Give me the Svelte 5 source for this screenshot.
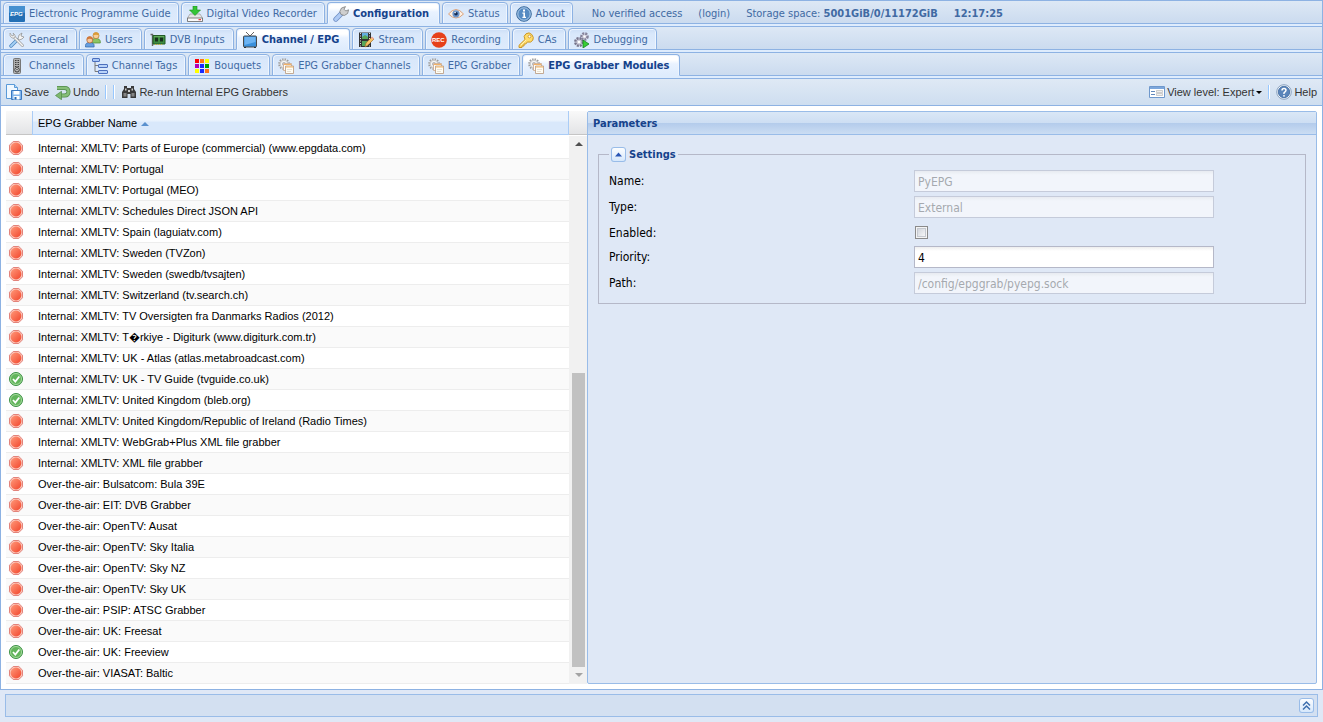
<script>
	const mainTabs = [
		{ label: 'Electronic Programme Guide', icon: 'epg' },
		{ label: 'Digital Video Recorder', icon: 'dvr' },
		{ label: 'Configuration', icon: 'wrench' },
		{ label: 'Status', icon: 'eye' },
		{ label: 'About', icon: 'info' }
	];

	const configTabs = [
		{ label: 'General', icon: 'tools' },
		{ label: 'Users', icon: 'users' },
		{ label: 'DVB Inputs', icon: 'card' },
		{ label: 'Channel / EPG', icon: 'tv' },
		{ label: 'Stream', icon: 'film' },
		{ label: 'Recording', icon: 'rec' },
		{ label: 'CAs', icon: 'key' },
		{ label: 'Debugging', icon: 'debug' }
	];

	const channelTabs = [
		{ label: 'Channels', icon: 'remote' },
		{ label: 'Channel Tags', icon: 'tree' },
		{ label: 'Bouquets', icon: 'grid' },
		{ label: 'EPG Grabber Channels', icon: 'grabber' },
		{ label: 'EPG Grabber', icon: 'grabber' },
		{ label: 'EPG Grabber Modules', icon: 'grabber' }
	];

	const modules = [
		{ name: 'Internal: XMLTV: Parts of Europe (commercial) (www.epgdata.com)' },
		{ name: 'Internal: XMLTV: Portugal' },
		{ name: 'Internal: XMLTV: Portugal (MEO)' },
		{ name: 'Internal: XMLTV: Schedules Direct JSON API' },
		{ name: 'Internal: XMLTV: Spain (laguiatv.com)' },
		{ name: 'Internal: XMLTV: Sweden (TVZon)' },
		{ name: 'Internal: XMLTV: Sweden (swedb/tvsajten)' },
		{ name: 'Internal: XMLTV: Switzerland (tv.search.ch)' },
		{ name: 'Internal: XMLTV: TV Oversigten fra Danmarks Radios (2012)' },
		{ name: 'Internal: XMLTV: T\uFFFDrkiye - Digiturk (www.digiturk.com.tr)' },
		{ name: 'Internal: XMLTV: UK - Atlas (atlas.metabroadcast.com)' },
		{ name: 'Internal: XMLTV: UK - TV Guide (tvguide.co.uk)', enabled: true },
		{ name: 'Internal: XMLTV: United Kingdom (bleb.org)', enabled: true },
		{ name: 'Internal: XMLTV: United Kingdom/Republic of Ireland (Radio Times)' },
		{ name: 'Internal: XMLTV: WebGrab+Plus XML file grabber' },
		{ name: 'Internal: XMLTV: XML file grabber' },
		{ name: 'Over-the-air: Bulsatcom: Bula 39E' },
		{ name: 'Over-the-air: EIT: DVB Grabber' },
		{ name: 'Over-the-air: OpenTV: Ausat' },
		{ name: 'Over-the-air: OpenTV: Sky Italia' },
		{ name: 'Over-the-air: OpenTV: Sky NZ' },
		{ name: 'Over-the-air: OpenTV: Sky UK' },
		{ name: 'Over-the-air: PSIP: ATSC Grabber' },
		{ name: 'Over-the-air: UK: Freesat' },
		{ name: 'Over-the-air: UK: Freeview', enabled: true },
		{ name: 'Over-the-air: VIASAT: Baltic' }
	];

	let mainTab = $state('Configuration');
	let configTab = $state('Channel / EPG');
	let channelTab = $state('EPG Grabber Modules');
	let enabled = $state(false);
	let priority = $state('4');
	let open = $state(true);
</script>

{#snippet icon(name)}
	<svg class="icon" viewBox="0 0 16 16" width="16" height="16" aria-hidden="true">
		{#if name === 'epg'}
			<rect width="16" height="16" rx="1" fill="#2470b5" />
			<rect width="16" height="7" rx="1" fill="#4590d0" />
			<text x="1" y="10" font-size="6" font-weight="bold" font-style="italic" font-family="Liberation Sans, sans-serif" fill="#fff">EPG</text>
		{:else if name === 'dvr'}
			<path d="M3 8h10l2.500 4v3H.5v-3z" fill="#e4e4e4" stroke="#999" stroke-width=".7" />
			<path d="M.5 12h15v3.500H.5z" fill="#fafafa" stroke="#666" stroke-width=".8" />
			<path d="M11.500 13.700H14" stroke="#e11" />
			<path d="M6 0h4v4h3.500L8 9.500 2.500 4H6z" fill="#34c534" stroke="#1b8c1f" stroke-width=".6" />
		{:else if name === 'wrench'}
			<path d="M2.800 13.200 8.500 7.500" stroke="#6f8fc4" stroke-width="5" stroke-linecap="round" />
			<path d="M2.800 13.200 8.500 7.500" stroke="#aecaf4" stroke-width="3.400" stroke-linecap="round" />
			<path d="M8 8.500 6.800 5.500 8.500 2 12.500.6 11 3.200l1.800 1.800 2.800-1.200-1 3.700-3.300 2z" fill="#cfcfcf" stroke="#7f7f7f" stroke-width=".8" />
		{:else if name === 'eye'}
			<path d="M.5 8Q8-1 15.500 8 8 16 .5 8z" fill="#fdf1e6" stroke="#d9a27c" />
			<circle cx="8" cy="7.800" r="3.600" fill="#6a93c8" />
			<circle cx="8" cy="7.800" r="1.800" fill="#142a52" />
			<circle cx="7.100" cy="6.600" r=".8" fill="#fff" />
		{:else if name === 'info'}
			<circle cx="8" cy="8" r="7.300" fill="#568bc2" stroke="#3d6b9c" />
			<circle cx="8" cy="8" r="6.200" fill="none" stroke="#b4d0ec" stroke-width=".9" />
			<path d="M7 3.500h2v2H7zM6.400 6.500H9v4.300h1v1.200H6.400v-1.200h1V7.700h-1z" fill="#fff" />
		{:else if name === 'tools'}
			<path d="m2 14 6-6" stroke="#4e86bf" stroke-width="3.400" stroke-linecap="round" />
			<path d="m2 14 6-6" stroke="#a5d0f4" stroke-width="1.800" stroke-linecap="round" />
			<path d="m4.500 4.500 9 9" stroke="#9a9a9a" stroke-width="2.800" stroke-linecap="round" />
			<path d="m4.500 4.500 9 9" stroke="#f5f5f5" stroke-width="1.500" stroke-linecap="round" />
			<path d="M1 1v3l2 2h2l1-1V3L4 1 5 3 3 4z" fill="#eee" stroke="#8f8f8f" stroke-width=".6" />
			<path d="m9 7 1-4 3-2-1 3 3 1-2 2-3 1z" fill="#f3f3f3" stroke="#8a8a8a" stroke-width=".7" />
		{:else if name === 'users'}
			<path d="M6.500 11V9.500q0-3 4.300-3t4.500 3V11z" fill="#8cc563" stroke="#4f8a2e" stroke-width=".7" />
			<circle cx="11" cy="3.700" r="3" fill="#f8cf97" stroke="#b3772a" stroke-width=".7" />
			<path d="M8 3.300q0-3.100 3-3.100t3 3.100q-3-1.300-6 0z" fill="#d99b38" />
			<path d="M.5 15v-1.500q0-3 4.300-3t4.300 3V15z" fill="#679fe0" stroke="#3266a5" stroke-width=".7" />
			<circle cx="4.800" cy="8" r="3" fill="#f7c79b" stroke="#ad5b2a" stroke-width=".7" />
			<path d="M1.800 7.800q-.5-3.500 3-3.500t3 3.500q-3-2-6 0z" fill="#d0783a" />
		{:else if name === 'card'}
			<path d="M.5 2.500h2V14" fill="none" stroke="#666" stroke-width="1.400" />
			<path d="M3 3.500h12v8.500H3z" fill="#3f8c41" stroke="#235c27" />
			<path d="M5 5.500h3v4H5zM10 5.500h3v4h-3z" fill="#16321c" />
			<path d="M5 12.500h8" stroke="#d2b841" stroke-dasharray="1 1" />
			<path d="M4 4.700h10" stroke="#8dcc7e" stroke-width=".6" />
		{:else if name === 'tv'}
			<path d="m4 0 4 4 4-4" fill="none" stroke="#666" />
			<rect x="1.500" y="4" width="13" height="11" rx="1" fill="#3a90dc" stroke="#4a4a4a" />
			<path d="M2.500 5h11v5l-11 3z" fill="#6db4f3" />
			<path d="M2 15.500h2m8 0h2" stroke="#333" />
		{:else if name === 'film'}
			<path d="M1 .5h12V15H1z" fill="#333" />
			<path d="M4 1h6v6H4z" fill="#65aee0" />
			<path d="m4 5 3-2 3 2v2H4zM4 9h6v5H4z" fill="#57a65a" />
			<path d="M2.500 1v14M11.500 1v14" stroke="#ddd" stroke-dasharray="1 1.500" />
			<path d="m7 15 1-4 6-6 2 2-6 6z" fill="#f8c368" stroke="#a8722a" stroke-width=".7" />
			<path d="m13 5.500 1-1 2 2-1 1z" fill="#f1a9a6" />
		{:else if name === 'rec'}
			<circle cx="8" cy="8" r="7.800" fill="#e6401a" />
			<text x="1" y="10" font-size="6" font-weight="bold" font-family="Liberation Sans, sans-serif" fill="#fff">REC</text>
		{:else if name === 'key'}
			<path d="M7 7.500 1 13.300v2.200h3V14h2v-2h1.800l1.500-2q4 1 5.500-1.800t-1-5.700T8 1.800 7 7.500z" fill="#ffdc6b" stroke="#c9962a" />
			<circle cx="11.500" cy="4.500" r="1.400" fill="#fff" stroke="#bb8419" stroke-width=".7" />
			<path d="m3 13 5-5" stroke="#fff4b8" />
		{:else if name === 'debug'}
			<circle cx="5" cy="10" r="3.800" fill="#c9c8d6" stroke="#77758c" stroke-width="2.400" stroke-dasharray="2 1" />
			<circle cx="10.500" cy="4.500" r="3.100" fill="#d3d2df" stroke="#85829a" stroke-width="2.400" stroke-dasharray="2 1" />
			<circle cx="5" cy="10" r="1.300" fill="#fff" />
			<circle cx="10.500" cy="4.500" r="1.100" fill="#fff" />
			<path d="m9 8 6 4-6 4z" fill="#36ce34" stroke="#148021" stroke-width=".8" />
		{:else if name === 'remote'}
			<rect x="4.500" y=".5" width="7" height="15" rx="1" fill="#b0b0b0" stroke="#777" />
			<path d="M6 2.500h4M6 4.500h4M6 6.500h4M6 8.500h4" stroke="#3c3c3c" stroke-dasharray="1 .5" />
			<circle cx="8" cy="11.800" r="2.200" fill="#eee" stroke="#333" />
			<circle cx="8" cy="11.800" r=".7" />
		{:else if name === 'tree'}
			<path d="M3 4v9.500h4M3 7.500h4" fill="none" stroke="#7a7a7a" />
			<rect x=".5" y=".5" width="7" height="3" rx=".5" fill="#a9c7f7" stroke="#4c6fbd" />
			<rect x="6.500" y="6.500" width="9" height="3" rx=".5" fill="#b9d3f9" stroke="#4c6fbd" />
			<rect x="6.500" y="12.500" width="9" height="3" rx=".5" fill="#b9d3f9" stroke="#4c6fbd" />
		{:else if name === 'grid'}
			<path d="M1 1h4v4H1z" fill="#f00" /><path d="M6 1h4v4H6z" fill="#ff7518" /><path d="M11 1h4v4h-4z" fill="#ff0" />
			<path d="M1 6h4v4H1z" fill="#b100b4" /><path d="M6 6h4v4H6z" fill="#1a29ff" /><path d="M11 6h4v4h-4z" fill="#00a400" />
			<path d="M1 11h4v4H1z" fill="#ff0" /><path d="M6 11h4v4H6z" fill="#1a29ff" /><path d="M11 11h4v4h-4z" fill="#ff7518" />
		{:else if name === 'grabber'}
			<circle cx="6" cy="6" r="4.900" fill="#f2f2f2" stroke="#9c9c9c" stroke-width="1.800" stroke-dasharray="1.400 1.170" />
			<circle cx="6" cy="6" r="3.800" fill="#f5f5f5" stroke="#b0b0b0" stroke-width=".7" />
			<circle cx="6" cy="6" r="1.600" fill="#dae7f8" stroke="#999" stroke-width=".6" />
			<path d="M5.500 5.500h8v7h-8z" fill="#fff" stroke="#c9a68a" stroke-width=".8" />
			<path d="M7.500 8h8v7.500h-8z" fill="#fffdf4" stroke="#b8977a" stroke-width=".8" />
			<path d="M6 6.500h7M8 9h7" stroke="#f3b366" />
			<path d="M9 11.500h5M9 13.500h4" stroke="#d6cdbd" stroke-width=".6" />
		{:else if name === 'save'}
			<path d="M.5.500h8l3 3v11H.5z" fill="#f0f8ff" stroke="#5a9ad8" />
			<path d="M8.500.500v3h3" fill="#b5d9f7" stroke="#5a9ad8" />
			<path d="M5.500 6.500h10v9h-10z" fill="#82b4ea" stroke="#3a78c0" />
			<path d="M7.500 7h6v3.500h-6zM7.500 12h6v3.500h-6z" fill="#fff" />
			<path d="M8.500 13h2v2.500h-2z" fill="#2b6db7" />
		{:else if name === 'undo'}
			<path d="M2 4h7.500q4 0 4 3.700t-4 3.800H6" fill="none" stroke="#4f8a48" stroke-width="4" />
			<path d="M2 4h7.500q4 0 4 3.700t-4 3.800H6" fill="none" stroke="#86be78" stroke-width="2.600" />
			<path d="M6.500 7.300v8.400l-6-4.200z" fill="#7db86e" stroke="#4f8a48" stroke-width=".7" />
		{:else if name === 'binoculars'}
			<path d="M3 2h3v2h4V2h3v3l2 3v6H9.500v-4h-3v4H1V8l2-3z" fill="#3a3a3a" />
			<path d="M2.500 9h3v3.500h-3zM10.500 9h3v3.500h-3z" fill="#858585" />
			<path d="M4 4.500h1.500v2H4zM10.500 4.500H12v2h-1.500zM7 6h2v2H7z" fill="#ccc" />
		{:else if name === 'view'}
			<path d="M.5 2.500h15v11H.5z" fill="#fff" stroke="#6f98cc" />
			<path d="M1 3h14v2H1z" fill="#7da7dc" />
			<path d="M2 7.500h4M2 10.500h4" stroke="#6188bd" />
			<path d="M7.500 6.500h6v2h-6zM7.500 9.500h6v2h-6z" fill="#eee" stroke="#bbb" stroke-width=".7" />
		{:else if name === 'help'}
			<circle cx="8" cy="8" r="7.300" fill="#f3f7fb" stroke="#8aa2bf" />
			<circle cx="8" cy="8" r="5.700" fill="#5a85ba" stroke="#3b679f" stroke-width=".8" />
			<path d="M6 6.500q0-2 2-2t2 1.800Q10 7.500 8 8.800V10" fill="none" stroke="#fff" stroke-width="1.500" />
			<circle cx="8" cy="11.800" r=".9" fill="#fff" />
		{:else if name === 'enabled'}
			<circle cx="8" cy="8" r="6.500" fill="#62b55b" stroke="#3d9146" />
			<circle cx="8" cy="8" r="5.500" fill="none" stroke="#a5d99d" />
			<path d="m5 8 2.300 2.500 4-5" fill="none" stroke="#fff" stroke-width="1.800" />
		{:else if name === 'disabled'}
			<path d="M5.200 1.500h5.600l3.700 3.700v5.600l-3.700 3.700H5.200l-3.700-3.700V5.200z" fill="#fbc5b9" stroke="#e2837b" />
			<circle cx="8" cy="8" r="5.400" fill="url(#stop)" />
		{/if}
	</svg>
{/snippet}

{#snippet tab(item, active, select)}
	<button class="tab" class:active={active === item.label} role="tab" aria-selected={active === item.label} onclick={() => select(item.label)}>
		{@render icon(item.icon)}
		<span>{item.label}</span>
	</button>
{/snippet}

<svg class="defs" width="0" height="0" aria-hidden="true">
	<linearGradient id="stop" x1="0" y1="0" x2="1" y2="1">
		<stop offset="0" stop-color="#ff9a7b" />
		<stop offset="1" stop-color="#f2452c" />
	</linearGradient>
</svg>

<div class="app">
	<header>
		<div class="tabbar main" role="tablist">
			{#each mainTabs as item}
				{@render tab(item, mainTab, (v) => (mainTab = v))}
			{/each}
			<div class="session">
				<span>No verified access</span>
				<a href="#login">(login)</a>
				<span>Storage space: <b>5001GiB/0/11172GiB</b></span>
				<b>12:17:25</b>
			</div>
		</div>
		<div class="tabbar" role="tablist">
			{#each configTabs as item}
				{@render tab(item, configTab, (v) => (configTab = v))}
			{/each}
		</div>
		<div class="tabbar" role="tablist">
			{#each channelTabs as item}
				{@render tab(item, channelTab, (v) => (channelTab = v))}
			{/each}
		</div>
	</header>

	<div class="toolbar">
		<button class="tool">{@render icon('save')}Save</button>
		<button class="tool">{@render icon('undo')}Undo</button>
		<span class="separator"></span>
		<span class="separator"></span>
		<button class="tool">{@render icon('binoculars')}Re-run Internal EPG Grabbers</button>
		<span class="fill"></span>
		<button class="tool">{@render icon('view')}View level: Expert<span class="caret"></span></button>
		<span class="separator"></span>
		<button class="tool">{@render icon('help')}Help</button>
	</div>

	<main>
		<section class="list">
			<table>
				<thead>
					<tr>
						<th class="status" aria-label="Status"></th>
						<th class="name">EPG Grabber Name<span class="sort"></span></th>
					</tr>
				</thead>
				<tbody>
					{#each modules as module}
						<tr>
							<td class="status">{@render icon(module.enabled ? 'enabled' : 'disabled')}</td>
							<td class="name">{module.name}</td>
						</tr>
					{/each}
				</tbody>
			</table>
			<div class="side">
				<div class="corner"></div>
				<div class="scrollbar">
					<span class="arrow up"></span>
					<div class="track"><div class="thumb"></div></div>
					<span class="arrow down"></span>
				</div>
			</div>
		</section>

		<section class="panel">
			<h2>Parameters</h2>
			<form>
				<fieldset>
					<legend>
						<button type="button" class="toggle" aria-label="Collapse settings" onclick={() => (open = !open)}>
							<svg viewBox="0 0 15 15" width="15" height="15"><path d="M4 9.500h7L7.500 5.500z" fill="#2a56b5" /></svg>
						</button>
						Settings
					</legend>
					{#if open}
						<div class="field">
							<label for="name">Name:</label>
							<input id="name" type="text" value="PyEPG" disabled />
						</div>
						<div class="field">
							<label for="type">Type:</label>
							<input id="type" type="text" value="External" disabled />
						</div>
						<div class="field check">
							<label for="enabled">Enabled:</label>
							<input id="enabled" type="checkbox" bind:checked={enabled} />
						</div>
						<div class="field">
							<label for="priority">Priority:</label>
							<input id="priority" type="text" bind:value={priority} />
						</div>
						<div class="field">
							<label for="path">Path:</label>
							<input id="path" type="text" value="/config/epggrab/pyepg.sock" disabled />
						</div>
					{/if}
				</fieldset>
			</form>
		</section>
	</main>

	<footer>
		<div class="dock">
			<button class="toggle" aria-label="Expand log">
				<svg viewBox="0 0 15 15" width="15" height="15"><path d="m4 7.500 3.500-3.500L11 7.500M4 11.500 7.500 8l3.500 3.500" fill="none" stroke="#3f6fae" stroke-width="1.500" /></svg>
			</button>
		</div>
	</footer>
</div>

<style>
	:global(body) {
		margin: 0;
		background: #dfe8f6;
	}

	* {
		box-sizing: border-box;
	}

	button {
		margin: 0;
		padding: 0;
		border: 0;
		background: none;
		font: inherit;
		color: inherit;
		cursor: pointer;
	}

	.defs {
		position: absolute;
	}

	.icon {
		display: block;
		flex: none;
	}

	.app {
		display: flex;
		flex-direction: column;
		min-height: 100vh;
		font: 11px/14px 'DejaVu Sans Condensed', 'DejaVu Sans', sans-serif;
	}

	header,
	.toolbar,
	main {
		border: solid #8db2e3;
		border-width: 0 1px;
	}

	.tabbar {
		display: flex;
		align-items: flex-end;
		gap: 2px;
		height: 26px;
		padding: 0 2px 2px;
		border-top: 1px solid #8db2e3;
		background: linear-gradient(#dde8f5, #cbdbef 22px, #8db2e3 22px, #8db2e3 23px, #deecfd 23px);
	}

	.tab {
		display: flex;
		align-items: center;
		gap: 4px;
		height: 22px;
		padding: 2px 8px 0 5px;
		border: 1px solid #8db2e3;
		border-radius: 4px 4px 0 0;
		background: linear-gradient(#ccdef6, #d9e8fb 25%, #deebfc);
		box-shadow: inset 1px 1px #eef5fe, inset -1px 0 #eef5fe;
		color: #416aa3;
		white-space: nowrap;
	}

	.main .tab {
		padding-right: 7px;
	}

	.tab.active {
		padding-right: 10px;
		border-bottom-color: #deecfd;
		background: linear-gradient(#fff, #fff 25%, #e9f2ff 45%, #deecfd);
		color: #15428b;
		font-weight: bold;
	}

	.session {
		display: flex;
		align-self: center;
		gap: 16px;
		margin-left: 17px;
		padding-top: 2px;
		color: #416aa3;
		white-space: nowrap;
	}

	.session a {
		color: inherit;
		text-decoration: none;
	}

	.toolbar {
		display: flex;
		align-items: center;
		height: 28px;
		padding: 0 5px;
		border-width: 1px;
		background: linear-gradient(#dfe9f5, #cedef0);
		font-family: 'Liberation Sans', Arial, sans-serif;
	}

	.tool {
		display: flex;
		align-items: center;
		gap: 2px;
		margin-right: 6px;
		color: #333;
		white-space: nowrap;
	}

	.tool:last-child {
		margin-right: 0;
	}

	.separator {
		width: 2px;
		height: 14px;
		margin-right: 6px;
		border-left: 1px solid #98c8ff;
		border-right: 1px solid #fff;
	}

	.fill {
		flex: 1;
	}

	.caret {
		border: solid transparent;
		border-width: 3px 3px 0;
		border-top-color: #000;
	}

	main {
		display: grid;
		grid-template-columns: 581fr 730fr;
		flex: 1;
		padding: 5px;
		border-bottom-width: 1px;
		background: #fff;
	}

	.list {
		display: flex;
		font-family: 'Liberation Sans', Arial, sans-serif;
	}

	table {
		flex: 1;
		border-collapse: separate;
		border-spacing: 0;
		table-layout: fixed;
	}

	th {
		height: 24px;
		padding: 0;
		border-bottom: 1px solid #c5c5c5;
		background: linear-gradient(#f9f9f9, #e3e4e6);
		font-weight: normal;
		text-align: left;
	}

	th.name {
		border-left: 1px solid #aaccf6;
		border-right: 1px solid #aaccf6;
		border-bottom-color: #aaccf6;
		background: linear-gradient(#ebf3fd, #ebf3fd 40%, #d9e8fb 50%);
	}

	tbody::before {
		content: '';
		display: block;
		height: 3px;
	}

	td {
		height: 21px;
		padding: 0;
		border-bottom: 1px solid #ededed;
	}

	tbody tr:nth-child(even) {
		background: #fafafa;
	}

	.status {
		width: 26px;
		padding-left: 2px;
	}

	.name {
		padding-left: 6px;
		color: #000;
		white-space: nowrap;
	}

	th.name {
		padding-left: 5px;
	}

	.sort {
		display: inline-block;
		margin: 0 0 1px 4px;
		border: solid transparent;
		border-width: 0 4px 4px;
		border-bottom-color: #5a90ce;
	}

	.side {
		display: flex;
		flex-direction: column;
		width: 18px;
	}

	.corner {
		height: 24px;
		border-bottom: 1px solid #c5c5c5;
		background: linear-gradient(#f9f9f9, #e3e4e6);
	}

	.scrollbar {
		display: flex;
		flex: 1;
		flex-direction: column;
		align-items: center;
		justify-content: space-between;
		margin-top: 1px;
		padding: 6px 0 7px 1px;
		background: #f1f1f1;
	}

	.arrow {
		border: solid transparent;
	}

	.up {
		border-width: 0 4px 4px;
		border-bottom-color: #505050;
	}

	.down {
		border-width: 4px 4px 0;
		border-top-color: #a3a3a3;
	}

	.track {
		display: flex;
		flex: 1;
		flex-direction: column;
		justify-content: flex-end;
		width: 13px;
		margin: 6px 0;
	}

	.thumb {
		height: 57%;
		background: #c1c1c1;
	}

	.panel {
		border: 1px solid #99bce8;
		border-radius: 2px;
		background: #dfe8f6;
	}

	h2 {
		height: 23px;
		margin: 0;
		padding: 0 5px;
		border-bottom: 1px solid #99bce8;
		background: linear-gradient(#dae7f6, #cddef3 11px, #b3cbeb 11px, #cbddf3);
		color: #15428b;
		font-size: 11px;
		line-height: 23px;
	}

	form {
		padding: 12px 10px;
	}

	fieldset {
		min-width: 0;
		margin: 0;
		padding: 8px 10px 5px;
		border: 1px solid #b5b8c8;
	}

	legend {
		display: flex;
		align-items: center;
		gap: 3px;
		padding: 0 2px;
		color: #15428b;
		font-weight: bold;
	}

	.toggle {
		display: block;
		border-radius: 3px;
		box-shadow: inset 0 0 0 1px #99bce8;
		background: linear-gradient(#fff, #d3e6fb);
	}

	.toggle svg {
		display: block;
	}

	.field {
		display: grid;
		grid-template-columns: 300px minmax(0, 300px);
		gap: 5px;
		margin-bottom: 4px;
		font-size: 12px;
	}

	label {
		height: 22px;
		line-height: 22px;
		color: #000;
	}

	input[type='text'] {
		width: 100%;
		height: 22px;
		margin: 0;
		padding: 1px 3px 0;
		border: 1px solid #b5b8c8;
		border-radius: 0;
		background: linear-gradient(#eee, #fff 4px);
		font: inherit;
		color: #000;
	}

	input[type='text']:disabled {
		opacity: 0.6;
		color: #808080;
	}

	.check {
		height: 20px;
	}

	input[type='checkbox'] {
		width: 13px;
		height: 13px;
		margin: 4px 1px;
		border: 1px solid #8a8a8a;
		box-shadow: inset 0 0 0 1px #f4f4f4, inset 0 0 0 2px #c5c9d0;
		background: linear-gradient(135deg, #c9cdd5, #fff);
		appearance: none;
	}

	input[type='checkbox']:checked {
		background: #416aa3;
	}

	footer {
		padding: 4px 5px 5px;
		background: #dfe8f6;
	}

	.dock {
		display: flex;
		align-items: center;
		justify-content: flex-end;
		height: 23px;
		padding-right: 3px;
		border: 1px solid #99bce8;
		background: #d3e0f1;
	}
</style>
